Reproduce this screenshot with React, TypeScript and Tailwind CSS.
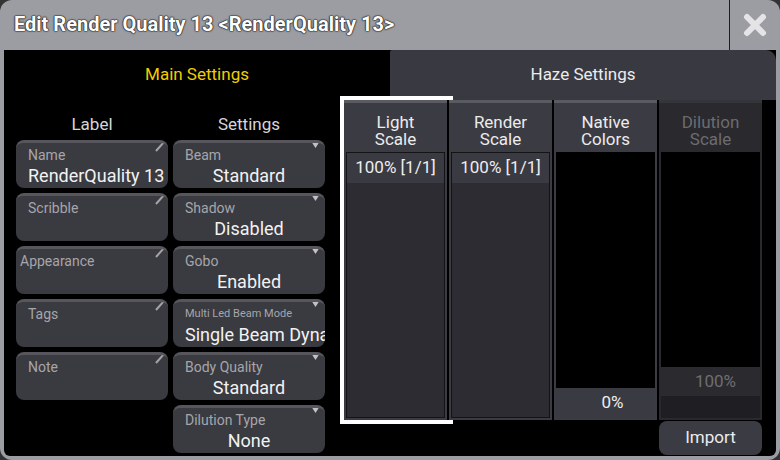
import { ReactNode } from "react";

type FieldProps = {
  label: string;
  value?: string;
  kind: "edit" | "select";
  labelPad?: string;
  labelSize?: string;
  valueAlign?: string;
};

const EditMark = () => (
  <svg className="absolute right-[3px] top-[-2px]" width="10" height="11" viewBox="0 0 10 11">
    <line x1="1" y1="10" x2="9" y2="1" stroke="#a3a3a8" strokeWidth="2" />
  </svg>
);

const SelectMark = () => (
  <svg className="absolute right-[5px] top-[-2px]" width="9" height="7" viewBox="0 0 9 7">
    <polygon points="0,0 9,0 4.5,7" fill="#c2c2c6" />
  </svg>
);

const Field = ({ label, value, kind, labelPad = "px-[12px]", labelSize = "text-[14px]", valueAlign }: FieldProps) => (
  <div className="relative h-[48px] rounded-[8px] border-t-[3px] border-[#56565c] bg-[#3a3a41] overflow-hidden">
    {kind === "edit" ? <EditMark /> : <SelectMark />}
    <div className={`pt-[4px] ${labelPad} h-[16px] box-content leading-[16px] ${labelSize} text-[#a6a6aa]`}>{label}</div>
    {value && (
      <div
        className={`mt-[2px] px-[12px] text-[18px] leading-[22px] text-[#f2f2f2] whitespace-nowrap ${
          valueAlign ?? (kind === "edit" ? "text-left" : "text-center")
        }`}
      >
        {value}
      </div>
    )}
  </div>
);

const Column = ({
  title,
  dim,
  children,
  selected,
}: {
  title: [string, string];
  dim?: boolean;
  children: ReactNode;
  selected?: boolean;
}) => (
  <div
    className={`relative flex flex-col border-t-[3px] ${
      dim ? "bg-[#29292e] border-[#34343a]" : "bg-[#3b3b43] border-[#5a5a61]"
    }`}
  >
    <div
      className={`h-[49px] pt-[11px] text-center text-[17px] leading-[17px] ${
        dim ? "text-[#6c6c70]" : "text-[#ececec]"
      }`}
    >
      <div>{title[0]}</div>
      <div>{title[1]}</div>
    </div>
    <div className="flex-1 mx-[2px] mb-[2px] flex flex-col">{children}</div>
    {selected && <div className="absolute -top-[7px] -left-[4px] -right-[6px] -bottom-[4px] border-4 border-white" />}
  </div>
);

const Cell = ({ text, tone }: { text: string; tone: string }) => (
  <div className={`h-[30px] flex items-center justify-center text-[17px] ${tone}`}>{text}</div>
);

export default function App() {
  return (
    <div className="w-[780px] h-[460px] bg-[#333336] font-['Roboto',sans-serif]">
      <div className="h-full rounded-[12px] bg-[#9c9da2] flex flex-col overflow-hidden">
        <header className="h-[50px] flex">
          <div className="flex-1 flex items-center pl-[14px] pb-[2px] text-[20px] font-bold text-white [text-shadow:0_0_2px_#1e1e1e,0_0_1px_#1e1e1e,0_0_1px_#1e1e1e,0_0_1px_#1e1e1e]">
            Edit Render Quality 13 &lt;RenderQuality 13&gt;
          </div>
          <div className="w-[51px] border-l border-[#1e1e20] flex items-center justify-center">
            <svg width="24" height="24" viewBox="0 0 24 24">
              <path d="M4 4 L20 20 M20 4 L4 20" stroke="#e4e4e6" strokeWidth="6" strokeLinecap="round" />
            </svg>
          </div>
        </header>

        <main className="flex-1 mx-[4px] mb-[4px] bg-black rounded-b-[6px] flex flex-col overflow-hidden">
          <div className="h-[50px] flex">
            <div className="w-[386px] flex items-center justify-center text-[17px] text-[#f2cd00]">Main Settings</div>
            <div className="flex-1 flex items-center justify-center text-[17px] text-[#ececec] bg-[#393941] rounded-tl-[2px] rounded-tr-[10px]">
              Haze Settings
            </div>
          </div>

          <div className="flex-1 flex">
            <section className="w-[336px] pl-[12px] grid grid-cols-[152px_152px] gap-x-[5px] content-start">
              <div className="flex flex-col gap-[5px]">
                <div className="pt-[14px] mb-[1px] h-[20px] box-content text-center text-[17px] leading-[20px] text-[#d6d6d8]">Label</div>
                <Field kind="edit" label="Name" value="RenderQuality 13" />
                <Field kind="edit" label="Scribble" />
                <Field kind="edit" label="Appearance" labelPad="px-[4px]" />
                <Field kind="edit" label="Tags" />
                <Field kind="edit" label="Note" />
              </div>
              <div className="flex flex-col gap-[5px]">
                <div className="pt-[14px] mb-[1px] h-[20px] box-content text-center text-[17px] leading-[20px] text-[#d6d6d8]">Settings</div>
                <Field kind="select" label="Beam" value="Standard" />
                <Field kind="select" label="Shadow" value="Disabled" />
                <Field kind="select" label="Gobo" value="Enabled" />
                <Field kind="select" label="Multi Led Beam Mode" labelSize="text-[11px]" value="Single Beam Dynamic" valueAlign="text-left" />
                <Field kind="select" label="Body Quality" value="Standard" />
                <Field kind="select" label="Dilution Type" value="None" />
              </div>
            </section>

            <section className="pl-[4px] flex flex-col">
              <div className="w-[418px] h-[320px] grid grid-cols-4 gap-[2px]">
                <Column title={["Light", "Scale"]} selected>
                  <div className="flex-1 border border-[#141417] bg-[#2c2c32]">
                    <Cell text="100% [1/1]" tone="bg-[#3a3a42] text-[#ededed]" />
                  </div>
                </Column>
                <Column title={["Render", "Scale"]}>
                  <div className="flex-1 border border-[#141417] bg-[#2c2c32]">
                    <Cell text="100% [1/1]" tone="bg-[#3a3a42] text-[#ededed]" />
                  </div>
                </Column>
                <Column title={["Native", "Colors"]}>
                  <div className="flex-1 bg-black flex flex-col justify-end">
                    <div className="h-[30px] flex items-center justify-center pl-[14px] text-[17px] bg-[#3a3a42] text-[#ededed]">0%</div>
                  </div>
                </Column>
                <Column title={["Dilution", "Scale"]} dim>
                  <div className="flex-1 bg-black flex flex-col justify-end">
                    <div className="h-[29px] flex items-center justify-center pl-[10px] text-[17px] bg-[#2a2a2f] text-[#6e6e72]">100%</div>
                    <div className="h-[22px] bg-[#1f1f23]" />
                  </div>
                </Column>
              </div>
              <div className="w-[418px] flex justify-end mt-[1px]">
                <button className="w-[103px] h-[34px] rounded-[8px] bg-[#3b3b43] text-[17px] text-[#ececec]">Import</button>
              </div>
            </section>
          </div>
        </main>
      </div>
    </div>
  );
}
